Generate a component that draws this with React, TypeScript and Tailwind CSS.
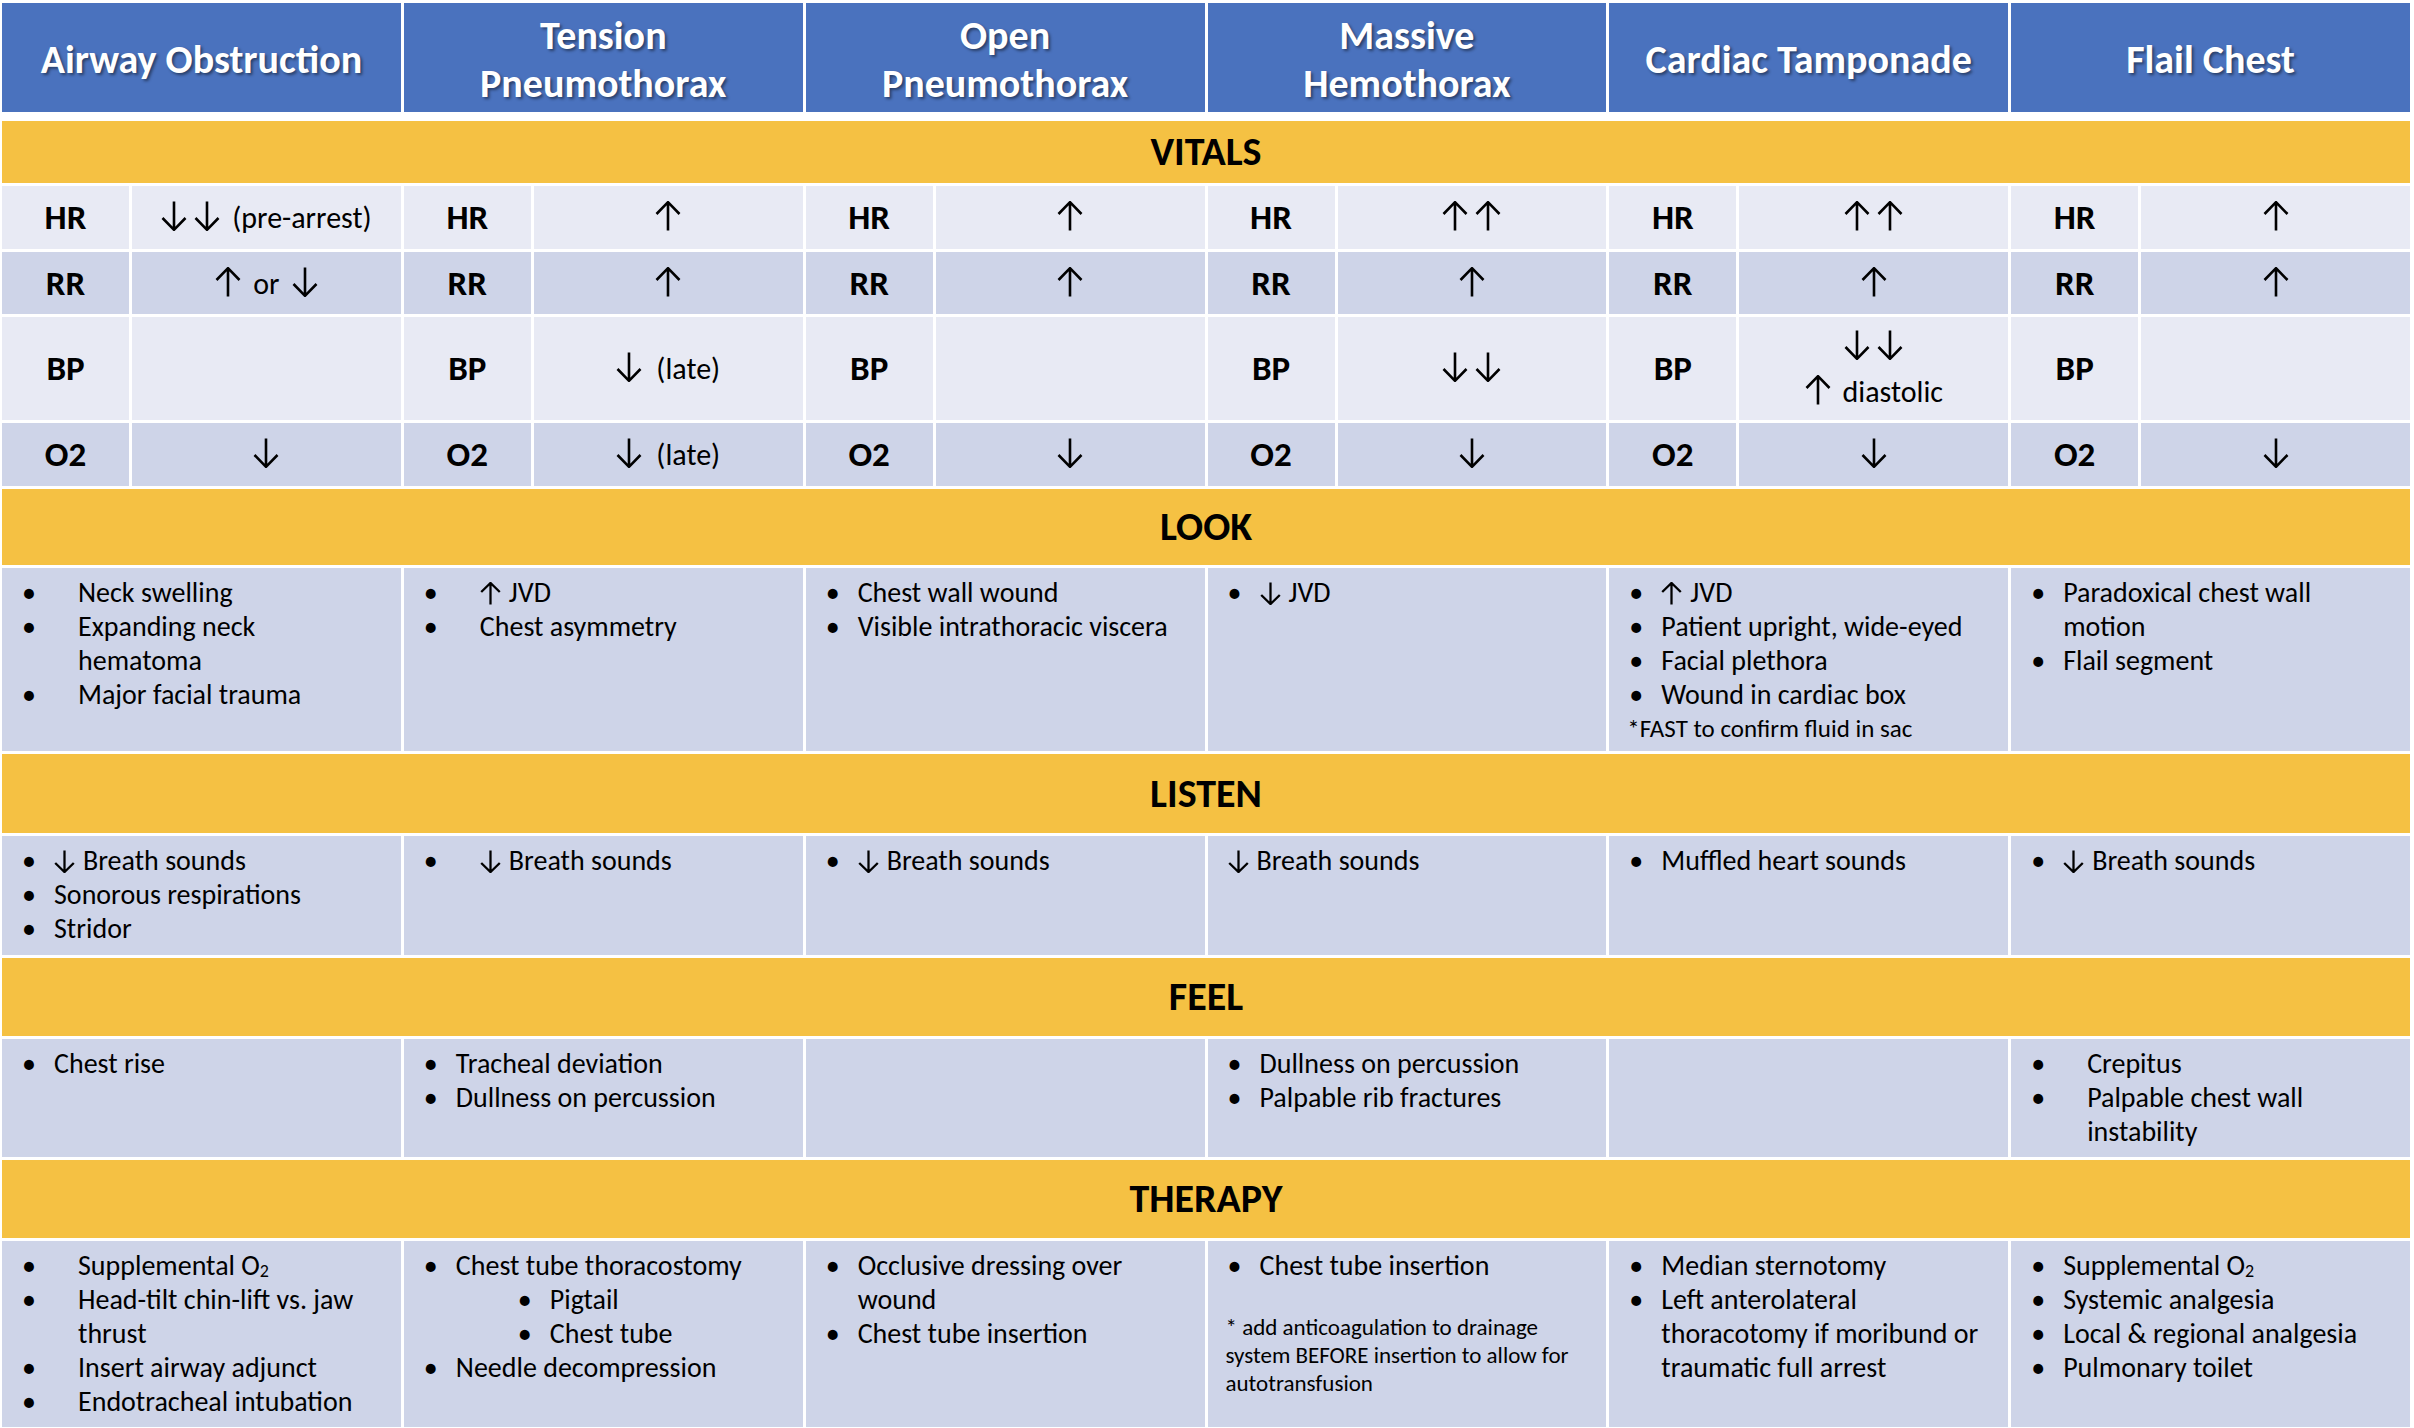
import type { ReactNode } from "react";

// thin open-headed arrow, like the math-font arrows in the source slide
function Arr({ up, big, className = "" }: { up?: boolean; big?: boolean; className?: string }) {
  const size = big ? "w-[26px] h-[30px] align-[-3px]" : "w-[21px] h-[23px] align-[-3px]";
  return (
    <svg
      viewBox="0 0 26 30"
      preserveAspectRatio="none"
      className={`inline-block ${size} ${up ? "rotate-180" : ""} ${className}`}
      fill="none"
      stroke="black"
      strokeWidth={big ? 2.6 : 2.8}
    >
      <path d="M13 0.5 V28.5 M1.5 17 L13 28.8 L24.5 17" />
    </svg>
  );
}

const HEADERS: ReactNode[] = [
  "Airway Obstruction",
  <>Tension<br />Pneumothorax</>,
  <>Open<br />Pneumothorax</>,
  <>Massive<br />Hemothorax</>,
  "Cardiac Tamponade",
  "Flail Chest",
];

const up1 = <Arr up big />;
const down1 = <Arr big />;
const up2 = (
  <>
    <Arr up big />
    <Arr up big className="ml-[7px]" />
  </>
);
const down2 = (
  <>
    <Arr big />
    <Arr big className="ml-[7px]" />
  </>
);
const downLate = (
  <>
    <Arr big className="mr-[14px]" />
    (late)
  </>
);

type Vital = { label: string; h: string; tone: string; values: ReactNode[] };

const VITALS: Vital[] = [
  {
    label: "HR",
    h: "h-[63px]",
    tone: "bg-[#E8EAF4]",
    values: [
      <>
        {down2}
        <span className="ml-[12px]">(pre-arrest)</span>
      </>,
      up1,
      up1,
      up2,
      up2,
      up1,
    ],
  },
  {
    label: "RR",
    h: "h-[62px]",
    tone: "bg-[#CED4E8]",
    values: [
      <>
        <Arr up big className="mr-[12px]" />
        or
        <Arr big className="ml-[12px]" />
      </>,
      up1,
      up1,
      up1,
      up1,
      up1,
    ],
  },
  {
    label: "BP",
    h: "h-[103px]",
    tone: "bg-[#E8EAF4]",
    values: [
      "",
      downLate,
      "",
      down2,
      <span className="flex flex-col items-center gap-[12px]">
        <span className="leading-[32px]">{down2}</span>
        <span className="leading-[32px]">
          <Arr up big className="mr-[12px]" />
          diastolic
        </span>
      </span>,
      "",
    ],
  },
  { label: "O2", h: "h-[63px]", tone: "bg-[#CED4E8]", values: [down1, downLate, down1, down1, down1, down1] },
];

const O2 = () => (
  <>
    O<sub className="text-[18px] relative top-[2px] align-baseline">2</sub>
  </>
);

function Li({ children, wide, nest, plain }: { children: ReactNode; wide?: boolean; nest?: boolean; plain?: boolean }) {
  return (
    <div className="flex">
      {!plain && (
        <span className={`${nest ? "ml-[94px]" : ""} ${wide ? "w-[56px]" : "w-[32px]"} shrink-0`}>•</span>
      )}
      <span>{children}</span>
    </div>
  );
}

function Cell({ children }: { children?: ReactNode }) {
  return (
    <div className="bg-[#CED4E8] pl-[20px] pt-[8px] text-[28px] leading-[34px] whitespace-nowrap text-black">
      {children}
    </div>
  );
}

function Band({ title, h }: { title: string; h: string }) {
  return (
    <div className={`${h} bg-[#F5C143] flex items-center justify-center text-[40px] font-bold text-black`}>
      {title}
    </div>
  );
}

const up = <Arr up className="mr-[8px]" />;
const down = <Arr className="mr-[8px]" />;

export default function App() {
  return (
    <div className="min-h-screen bg-white [font-family:Carlito,Calibri,Lato,sans-serif]">
      <div className="w-[2408px] ml-[2px] pt-[3px] flex flex-col gap-[3px]">
        {/* column headers */}
        <div className="grid grid-cols-6 gap-[3px] h-[109px] mb-[6px]">
          {HEADERS.map((h, i) => (
            <div
              key={i}
              className="bg-[#4A72BE] flex items-center justify-center pt-[5px] text-center text-white font-bold text-[40px] leading-[48px] [text-shadow:2px_2px_3px_rgba(0,0,0,0.45)]"
            >
              <div>{h}</div>
            </div>
          ))}
        </div>

        <Band title="VITALS" h="h-[62px]" />
        {VITALS.map(v => (
          <div key={v.label} className={`grid grid-cols-6 gap-[3px] ${v.h}`}>
            {v.values.map((val, i) => (
              <div key={i} className="grid grid-cols-[127px_1fr] gap-[3px]">
                <div className={`${v.tone} flex items-center justify-center text-[35px] font-bold`}>{v.label}</div>
                <div className={`${v.tone} flex items-center justify-center text-[30px] whitespace-nowrap`}>
                  <span>{val}</span>
                </div>
              </div>
            ))}
          </div>
        ))}

        <Band title="LOOK" h="h-[76px]" />
        <div className="grid grid-cols-6 gap-[3px] h-[183px]">
          <Cell>
            <Li wide>Neck swelling</Li>
            <Li wide>Expanding neck<br />hematoma</Li>
            <Li wide>Major facial trauma</Li>
          </Cell>
          <Cell>
            <Li wide>{up}JVD</Li>
            <Li wide>Chest asymmetry</Li>
          </Cell>
          <Cell>
            <Li>Chest wall wound</Li>
            <Li>Visible intrathoracic viscera</Li>
          </Cell>
          <Cell>
            <Li>{down}JVD</Li>
          </Cell>
          <Cell>
            <Li>{up}JVD</Li>
            <Li>Patient upright, wide-eyed</Li>
            <Li>Facial plethora</Li>
            <Li>Wound in cardiac box</Li>
            <div className="text-[25px] leading-[33px] -ml-[2px]">*FAST to confirm fluid in sac</div>
          </Cell>
          <Cell>
            <Li>Paradoxical chest wall<br />motion</Li>
            <Li>Flail segment</Li>
          </Cell>
        </div>

        <Band title="LISTEN" h="h-[79px]" />
        <div className="grid grid-cols-6 gap-[3px] h-[119px]">
          <Cell>
            <Li>{down}Breath sounds</Li>
            <Li>Sonorous respirations</Li>
            <Li>Stridor</Li>
          </Cell>
          <Cell>
            <Li wide>{down}Breath sounds</Li>
          </Cell>
          <Cell>
            <Li>{down}Breath sounds</Li>
          </Cell>
          <Cell>
            <Li plain>{down}Breath sounds</Li>
          </Cell>
          <Cell>
            <Li>Muffled heart sounds</Li>
          </Cell>
          <Cell>
            <Li>{down}Breath sounds</Li>
          </Cell>
        </div>

        <Band title="FEEL" h="h-[78px]" />
        <div className="grid grid-cols-6 gap-[3px] h-[118px]">
          <Cell>
            <Li>Chest rise</Li>
          </Cell>
          <Cell>
            <Li>Tracheal deviation</Li>
            <Li>Dullness on percussion</Li>
          </Cell>
          <Cell />
          <Cell>
            <Li>Dullness on percussion</Li>
            <Li>Palpable rib fractures</Li>
          </Cell>
          <Cell />
          <Cell>
            <Li wide>Crepitus</Li>
            <Li wide>Palpable chest wall<br />instability</Li>
          </Cell>
        </div>

        <Band title="THERAPY" h="h-[78px]" />
        <div className="grid grid-cols-6 gap-[3px] h-[186px]">
          <Cell>
            <Li wide>Supplemental <O2 /></Li>
            <Li wide>Head-tilt chin-lift vs. jaw<br />thrust</Li>
            <Li wide>Insert airway adjunct</Li>
            <Li wide>Endotracheal intubation</Li>
          </Cell>
          <Cell>
            <Li>Chest tube thoracostomy</Li>
            <Li nest>Pigtail</Li>
            <Li nest>Chest tube</Li>
            <Li>Needle decompression</Li>
          </Cell>
          <Cell>
            <Li>Occlusive dressing over<br />wound</Li>
            <Li>Chest tube insertion</Li>
          </Cell>
          <Cell>
            <Li>Chest tube insertion</Li>
            <div className="mt-[30px] -ml-[2px] text-[23px] leading-[28px]">
              * add anticoagulation to drainage
              <br />
              system BEFORE insertion to allow for
              <br />
              autotransfusion
            </div>
          </Cell>
          <Cell>
            <Li>Median sternotomy</Li>
            <Li>Left anterolateral<br />thoracotomy if moribund or<br />traumatic full arrest</Li>
          </Cell>
          <Cell>
            <Li>Supplemental <O2 /></Li>
            <Li>Systemic analgesia</Li>
            <Li>Local &amp; regional analgesia</Li>
            <Li>Pulmonary toilet</Li>
          </Cell>
        </div>
      </div>
    </div>
  );
}
